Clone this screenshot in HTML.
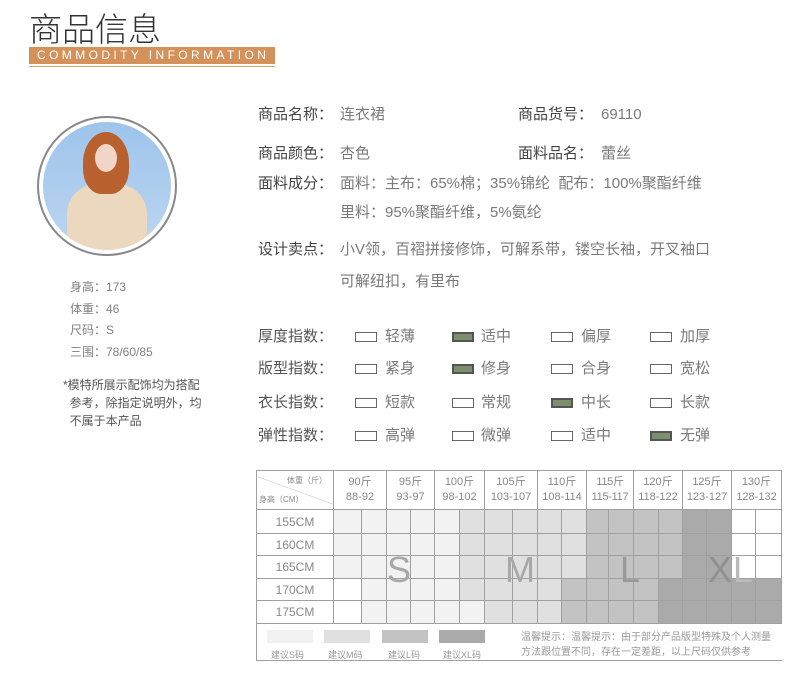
<!DOCTYPE html>
<html><head><meta charset="utf-8"><style>
*{margin:0;padding:0;box-sizing:border-box}
body{width:790px;height:696px;background:#fff;position:relative;font-family:"Liberation Sans","Noto Sans CJK SC",sans-serif;overflow:hidden}
.a{position:absolute;white-space:nowrap}
.lab{color:#444;font-size:15px;line-height:20px}
.val{color:#7a7a7a;font-size:15px;line-height:20px}
.m{color:#808080;font-size:12px}
.box{position:absolute;width:22px;height:10px;border:1px solid #666}
.box.on{background:#7a8f6c;border:2px solid #555}
.opt{position:absolute;font-size:15px;color:#7a7a7a;line-height:20px}
table{position:absolute;left:256px;top:470px;border-collapse:collapse;table-layout:fixed}
td{border:1px solid #a0a0a0;padding:0;font-size:12px;color:#888;text-align:center}
.s{background:#f2f2f2}.mm{background:#e0e0e0}.l{background:#c3c3c3}.x{background:#aaaaaa}.w{background:#fff}
.big{position:absolute;font-size:36px;color:#a8a8a8;font-weight:300}
</style></head><body>
<div class="a" style="left:29px;top:5px;font-size:33px;color:#333;font-family:'Noto Sans CJK SC',sans-serif;font-weight:300;line-height:44px">商品信息</div>
<div class="a" style="left:29px;top:47px;width:246px;height:17px;background:#d4915a;color:#fff;font-size:12px;letter-spacing:3.4px;line-height:17px;padding-left:8px">COMMODITY INFORMATION</div>
<div class="a" style="left:29px;top:66px;width:246px;height:1px;background:#d8a070"></div>

<div class="a" style="left:37px;top:116px;width:140px;height:140px;border-radius:50%;border:2px solid #888"></div>
<div class="a" style="left:43px;top:122px;width:128px;height:128px;border-radius:50%;background:linear-gradient(180deg,#9ec4ec,#bcd6f0);overflow:hidden">
 <div class="a" style="left:24px;top:62px;width:80px;height:80px;background:#ecd8bf;border-radius:30px 30px 0 0"></div>
 <div class="a" style="left:40px;top:10px;width:46px;height:62px;background:#b8612e;border-radius:50% 50% 40% 40%"></div>
 <div class="a" style="left:52px;top:22px;width:22px;height:28px;background:#f1d5c6;border-radius:50%"></div>
</div>
<div class="a m" style="left:70px;top:278px">身高：173</div>
<div class="a m" style="left:70px;top:300px">体重：46</div>
<div class="a m" style="left:70px;top:321px">尺码：S</div>
<div class="a m" style="left:70px;top:343px">三围：78/60/85</div>
<div class="a m" style="left:63px;top:376px;color:#555;line-height:18px;white-space:normal;width:160px">*模特所展示配饰均为搭配<br>&nbsp;&nbsp;参考，除指定说明外，均<br>&nbsp;&nbsp;不属于本产品</div>

<div class="a lab" style="left:258px;top:105px">商品名称：</div><div class="a val" style="left:340px;top:105px">连衣裙</div>
<div class="a lab" style="left:518px;top:105px">商品货号：</div><div class="a val" style="left:601px;top:105px">69110</div>
<div class="a lab" style="left:258px;top:144px">商品颜色：</div><div class="a val" style="left:340px;top:144px">杏色</div>
<div class="a lab" style="left:518px;top:144px">面料品名：</div><div class="a val" style="left:601px;top:144px">蕾丝</div>
<div class="a lab" style="left:258px;top:174px">面料成分：</div><div class="a val" style="left:340px;top:174px">面料：主布：65%棉；35%锦纶&nbsp;&nbsp;配布：100%聚酯纤维</div>
<div class="a val" style="left:340px;top:203px">里料：95%聚酯纤维，5%氨纶</div>
<div class="a lab" style="left:258px;top:240px">设计卖点：</div><div class="a val" style="left:340px;top:240px">小V领，百褶拼接修饰，可解系带，镂空长袖，开叉袖口</div>
<div class="a val" style="left:340px;top:272px">可解纽扣，有里布</div>

<div class="a lab" style="left:258px;top:327px;color:#555">厚度指数：</div>
<div class="a lab" style="left:258px;top:359px;color:#555">版型指数：</div>
<div class="a lab" style="left:258px;top:393px;color:#555">衣长指数：</div>
<div class="a lab" style="left:258px;top:426px;color:#555">弹性指数：</div>

<div class="box" style="left:355px;top:332px"></div><div class="opt" style="left:385px;top:327px">轻薄</div>
<div class="box on" style="left:452px;top:332px"></div><div class="opt" style="left:481px;top:327px">适中</div>
<div class="box" style="left:551px;top:332px"></div><div class="opt" style="left:581px;top:327px">偏厚</div>
<div class="box" style="left:650px;top:332px"></div><div class="opt" style="left:680px;top:327px">加厚</div>

<div class="box" style="left:355px;top:364px"></div><div class="opt" style="left:385px;top:359px">紧身</div>
<div class="box on" style="left:452px;top:364px"></div><div class="opt" style="left:481px;top:359px">修身</div>
<div class="box" style="left:551px;top:364px"></div><div class="opt" style="left:581px;top:359px">合身</div>
<div class="box" style="left:650px;top:364px"></div><div class="opt" style="left:680px;top:359px">宽松</div>

<div class="box" style="left:355px;top:398px"></div><div class="opt" style="left:385px;top:393px">短款</div>
<div class="box" style="left:452px;top:398px"></div><div class="opt" style="left:481px;top:393px">常规</div>
<div class="box on" style="left:551px;top:398px"></div><div class="opt" style="left:581px;top:393px">中长</div>
<div class="box" style="left:650px;top:398px"></div><div class="opt" style="left:680px;top:393px">长款</div>

<div class="box" style="left:355px;top:431px"></div><div class="opt" style="left:385px;top:426px">高弹</div>
<div class="box" style="left:452px;top:431px"></div><div class="opt" style="left:481px;top:426px">微弹</div>
<div class="box" style="left:551px;top:431px"></div><div class="opt" style="left:581px;top:426px">适中</div>
<div class="box on" style="left:650px;top:431px"></div><div class="opt" style="left:680px;top:426px">无弹</div>

<table>
<colgroup><col style="width:77px"><col style="width:28px"><col style="width:25px"><col style="width:24px"><col style="width:24px"><col style="width:25px"><col style="width:25px"><col style="width:28px"><col style="width:25px"><col style="width:24px"><col style="width:25px"><col style="width:22px"><col style="width:25px"><col style="width:25px"><col style="width:24px"><col style="width:24px"><col style="width:25px"><col style="width:24px"><col style="width:26px"></colgroup>
<tr style="height:39px;font-size:11px">
<td style="position:relative;background:linear-gradient(20deg,transparent 49.3%,#bbb 50%,transparent 50.7%)"><span style="position:absolute;right:6px;top:4px;font-size:8px;color:#888">体重（斤）</span><span style="position:absolute;left:2px;bottom:4px;font-size:8px;color:#888">身高（CM）</span></td>
<td colspan="2" style="font-size:11px;line-height:15px">90斤<br>88-92</td>
<td colspan="2" style="font-size:11px;line-height:15px">95斤<br>93-97</td>
<td colspan="2" style="font-size:11px;line-height:15px">100斤<br>98-102</td>
<td colspan="2" style="font-size:11px;line-height:15px">105斤<br>103-107</td>
<td colspan="2" style="font-size:11px;line-height:15px">110斤<br>108-114</td>
<td colspan="2" style="font-size:11px;line-height:15px;letter-spacing:-0.3px">115斤<br>115-117</td>
<td colspan="2" style="font-size:11px;line-height:15px">120斤<br>118-122</td>
<td colspan="2" style="font-size:11px;line-height:15px">125斤<br>123-127</td>
<td colspan="2" style="font-size:11px;line-height:15px">130斤<br>128-132</td>
</tr>
<tr style="height:24px"><td>155CM</td><td class="s"></td><td class="s"></td><td class="s"></td><td class="s"></td><td class="s"></td><td class="mm"></td><td class="mm"></td><td class="mm"></td><td class="mm"></td><td class="mm"></td><td class="l"></td><td class="l"></td><td class="l"></td><td class="l"></td><td class="x"></td><td class="x"></td><td class="w"></td><td class="w"></td></tr>
<tr style="height:22px"><td>160CM</td><td class="s"></td><td class="s"></td><td class="s"></td><td class="s"></td><td class="s"></td><td class="mm"></td><td class="mm"></td><td class="mm"></td><td class="mm"></td><td class="mm"></td><td class="l"></td><td class="l"></td><td class="l"></td><td class="l"></td><td class="x"></td><td class="x"></td><td class="w"></td><td class="w"></td></tr>
<tr style="height:23px"><td>165CM</td><td class="s"></td><td class="s"></td><td class="s"></td><td class="s"></td><td class="s"></td><td class="mm"></td><td class="mm"></td><td class="mm"></td><td class="mm"></td><td class="mm"></td><td class="l"></td><td class="l"></td><td class="l"></td><td class="l"></td><td class="x"></td><td class="x"></td><td class="w"></td><td class="w"></td></tr>
<tr style="height:22px"><td>170CM</td><td class="w"></td><td class="s"></td><td class="s"></td><td class="s"></td><td class="s"></td><td class="mm"></td><td class="mm"></td><td class="mm"></td><td class="mm"></td><td class="l"></td><td class="l"></td><td class="l"></td><td class="l"></td><td class="x"></td><td class="x"></td><td class="x"></td><td class="x"></td><td class="x"></td></tr>
<tr style="height:23px"><td>175CM</td><td class="w"></td><td class="s"></td><td class="s"></td><td class="s"></td><td class="s"></td><td class="s"></td><td class="mm"></td><td class="mm"></td><td class="mm"></td><td class="l"></td><td class="l"></td><td class="l"></td><td class="l"></td><td class="x"></td><td class="x"></td><td class="x"></td><td class="x"></td><td class="x"></td></tr>
<tr style="height:37px"><td colspan="19" style="border-right:none"></td></tr>
</table>
<div class="big" style="left:387px;top:549px">S</div>
<div class="big" style="left:505px;top:549px">M</div>
<div class="big" style="left:620px;top:549px;color:#999">L</div>
<div class="big" style="left:708px;top:549px;color:#909090">X</div><div class="big" style="left:733px;top:549px;color:#bbb">L</div>

<div class="a" style="left:267px;top:630px;width:46px;height:13px;background:#f2f2f2"></div>
<div class="a" style="left:324px;top:630px;width:46px;height:13px;background:#e0e0e0"></div>
<div class="a" style="left:382px;top:630px;width:46px;height:13px;background:#c3c3c3"></div>
<div class="a" style="left:439px;top:630px;width:46px;height:13px;background:#aaaaaa"></div>
<div class="a" style="left:271px;top:648px;font-size:9px;color:#999">建议S码</div>
<div class="a" style="left:328px;top:648px;font-size:9px;color:#999">建议M码</div>
<div class="a" style="left:388px;top:648px;font-size:9px;color:#999">建议L码</div>
<div class="a" style="left:443px;top:648px;font-size:9px;color:#999">建议XL码</div>
<div class="a" style="left:521px;top:630px;font-size:10px;color:#999;line-height:15px">温馨提示：温馨提示：由于部分产品版型特殊及个人测量<br>方法跟位置不同，存在一定差距，以上尺码仅供参考</div>
</body></html>
